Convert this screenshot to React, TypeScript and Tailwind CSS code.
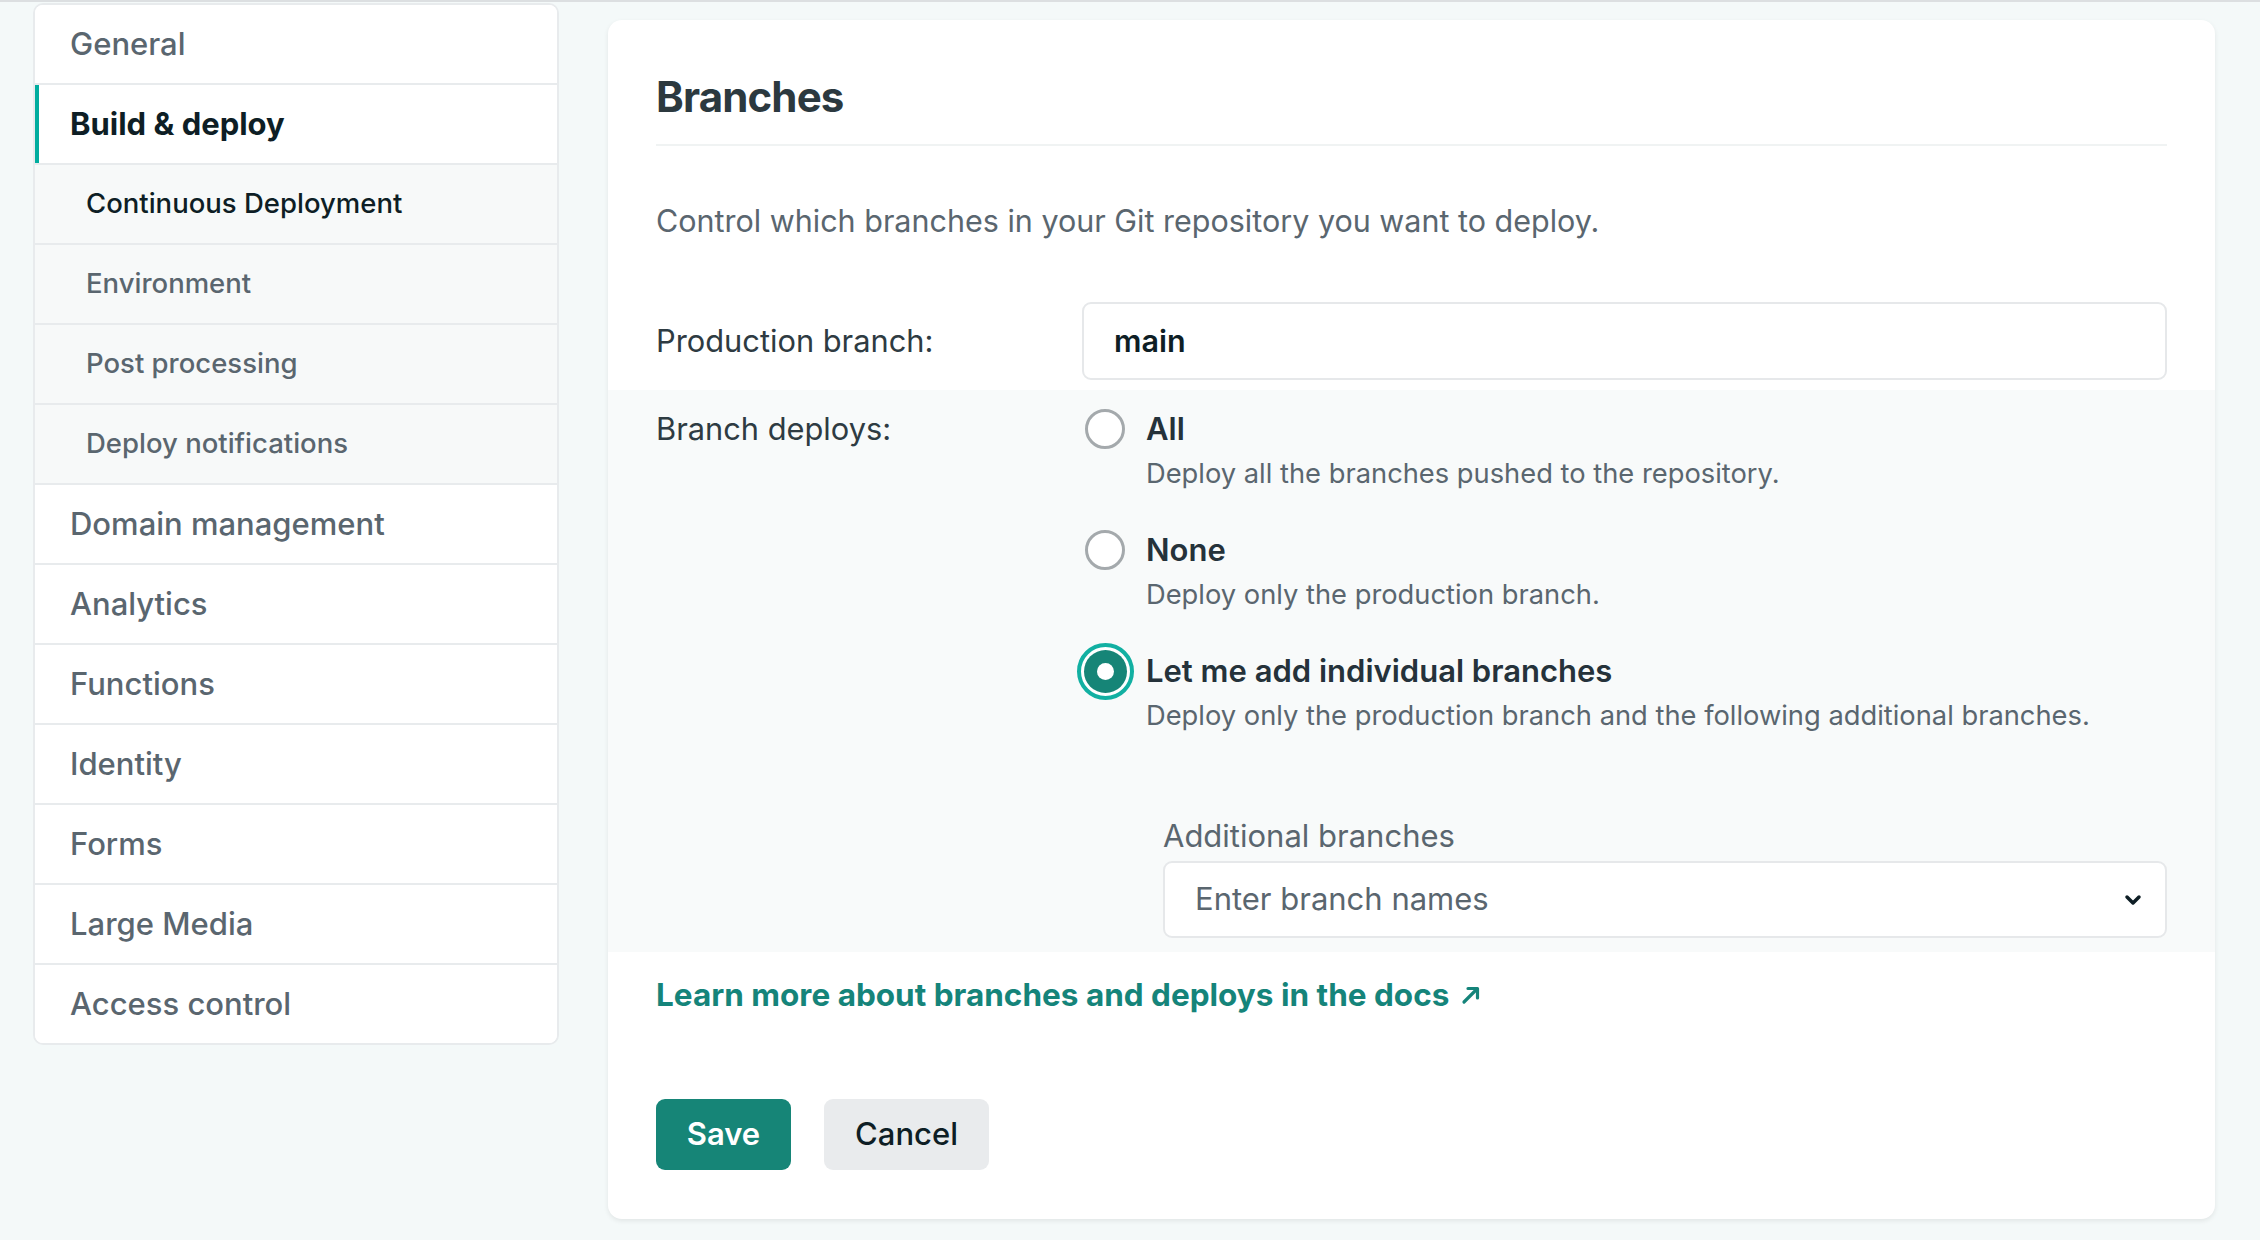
import { ChevronDown } from 'lucide-react';

const font = { fontFamily: 'Inter, "Noto Sans", Arial, sans-serif' };

// sidebar entries; sub items are the nested build & deploy pages
const navItems: { label: string; sub?: boolean; active?: boolean; current?: boolean }[] = [
  { label: 'General' },
  { label: 'Build & deploy', active: true },
  { label: 'Continuous Deployment', sub: true, current: true },
  { label: 'Environment', sub: true },
  { label: 'Post processing', sub: true },
  { label: 'Deploy notifications', sub: true },
  { label: 'Domain management' },
  { label: 'Analytics' },
  { label: 'Functions' },
  { label: 'Identity' },
  { label: 'Forms' },
  { label: 'Large Media' },
  { label: 'Access control' },
];

const options = [
  { title: 'All', desc: 'Deploy all the branches pushed to the repository.' },
  { title: 'None', desc: 'Deploy only the production branch.' },
  {
    title: 'Let me add individual branches',
    desc: 'Deploy only the production branch and the following additional branches.',
    checked: true,
  },
];

function Radio({ checked }: { checked?: boolean }) {
  if (checked) {
    return (
      <span className="flex h-[57px] w-[57px] shrink-0 items-center justify-center rounded-full border-[4px] border-[#12b0a2] bg-white">
        <span className="flex h-[43px] w-[43px] items-center justify-center rounded-full bg-[#168577]">
          <span className="h-[17px] w-[17px] rounded-full bg-white" />
        </span>
      </span>
    );
  }
  return <span className="block h-[40px] w-[40px] shrink-0 rounded-full border-[3px] border-[#a4a9ac] bg-white" />;
}

const ExternalArrow = () => (
  <svg viewBox="0 0 20 20" className="h-[20px] w-[20px]" fill="none" stroke="currentColor" strokeWidth={3.2} strokeLinecap="round" strokeLinejoin="round">
    <path d="M3 17L16 4" />
    <path d="M7 3.5h9.5V13" />
  </svg>
);

function Sidebar() {
  return (
    <nav className="mt-[1px] w-[526px] shrink-0 overflow-hidden rounded-[10px] border-2 border-[#e8ebed] bg-white">
      {navItems.map((item, i) => (
        <div
          key={item.label}
          className={`flex items-stretch ${i > 0 ? 'h-[80px] border-t-2 border-[#e8ebed]' : 'h-[78px]'} ${
            item.sub ? 'bg-[#f7f9f9]' : 'bg-white'
          }`}
        >
          {item.active ? <div className="w-[4px] bg-[#00ad9f]" /> : null}
          <div
            className={`flex items-center ${
              item.active ? 'pl-[31px]' : item.sub ? 'pl-[51px]' : 'pl-[35px]'
            } ${
              item.sub
                ? `text-[27.5px] ${item.current ? 'font-medium text-[#0e1e25]' : 'font-medium text-[#5a666f]'}`
                : item.active
                  ? 'text-[31px] font-bold text-[#0e1e25]'
                  : 'text-[31px] font-medium text-[#5a666f]'
            }`}
          >
            {item.label}
          </div>
        </div>
      ))}
    </nav>
  );
}

export default function App() {
  return (
    <div className="min-h-[1240px] w-full bg-[#f4f9f9]" style={font}>
      <div className="h-[2px] w-full bg-[#dcdfe1]" />
      <div className="flex items-start gap-[49px] pl-[33px] pr-[45px]">
        <Sidebar />

        <main className="mt-[18px] flex-1 rounded-[14px] bg-white pb-[49px] shadow-[0_2px_5px_rgba(0,0,0,0.08)]">
          <div className="px-[48px]">
            <div className="border-b-2 border-[#f0f3f3] pb-[23px] pt-[53px]">
              <h2 className="text-[42px] font-bold leading-[48px] tracking-[-0.02em] text-[#2c393f]">Branches</h2>
            </div>
            <p className="mt-[55px] text-[30.5px] leading-[40px] text-[#5a666f]">
              Control which branches in your Git repository you want to deploy.
            </p>
            <div className="mt-[61px] flex items-center pb-[10px]">
              <label className="w-[426px] shrink-0 text-[30.8px] leading-[40px] text-[#2e3b42]">Production branch:</label>
              <div className="flex h-[78px] flex-1 items-center rounded-[9px] border-2 border-[#e6e8ea] bg-white px-[30px]">
                <span className="text-[30.5px] font-semibold text-[#0e1e25]">main</span>
              </div>
            </div>
          </div>

          <section className="flex bg-[#f8fafa] px-[48px] pb-[14px] pt-[19px]">
            <div className="w-[426px] shrink-0 text-[30.8px] leading-[40px] text-[#2e3b42]">Branch deploys:</div>
            <div className="flex-1">
              {options.map((o, i) => (
                <div key={o.title} className={`flex ${i < options.length - 1 ? 'mb-[38px]' : ''}`}>
                  <div className="flex h-[40px] w-[46px] shrink-0 items-center justify-center">
                    <Radio checked={o.checked} />
                  </div>
                  <div className="ml-[18px]">
                    <div className="text-[31px] font-semibold leading-[40px] text-[#25323a]">{o.title}</div>
                    <div className="mt-[7px] text-[27.3px] leading-[36px] text-[#5a666f]">{o.desc}</div>
                  </div>
                </div>
              ))}

              <div className="ml-[81px] mt-[82px]">
                <div className="text-[31px] leading-[40px] text-[#5a666f]">Additional branches</div>
                <div className="mt-[5px] flex h-[77px] items-center justify-between rounded-[9px] border-2 border-[#e6e8ea] bg-white pl-[30px] pr-[20px]">
                  <span className="text-[31px] text-[#5a666f]">Enter branch names</span>
                  <ChevronDown className="h-[24px] w-[24px] text-[#0e1e25]" strokeWidth={3.5} />
                </div>
              </div>
            </div>
          </section>

          <div className="px-[48px]">
            <a className="mt-[23px] flex items-center gap-[12px] text-[31.5px] font-bold leading-[40px] text-[#15847a]">
              Learn more about branches and deploys in the docs
              <ExternalArrow />
            </a>

            <div className="mt-[84px] flex gap-[33px]">
              <button className="h-[71px] w-[135px] rounded-[9px] bg-[#168577] text-[31px] font-semibold text-white">
                Save
              </button>
              <button className="h-[71px] w-[165px] rounded-[9px] bg-[#e9ebed] text-[31px] font-medium text-[#0e1e25]">
                Cancel
              </button>
            </div>
          </div>
        </main>
      </div>
    </div>
  );
}
